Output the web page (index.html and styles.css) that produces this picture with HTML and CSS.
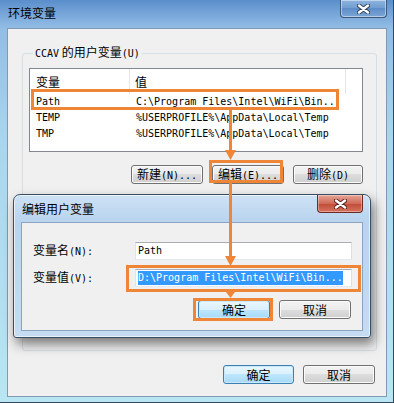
FILE: index.html
```html
<!DOCTYPE html>
<html lang="zh-CN">
<head>
<meta charset="utf-8">
<title>环境变量</title>
<link rel="stylesheet" href="styles.css">
</head>
<body>
<div class="window">
  <div class="titlebar">
    <span class="title">环境变量</span>
    <span class="close-btn">
      <svg width="13" height="10" viewBox="0 0 13 10"><path d="M2 1.5L11 8.5M11 1.5L2 8.5" stroke="#2d3f55" stroke-width="4.2" stroke-linecap="round"/><path d="M2 1.5L11 8.5M11 1.5L2 8.5" stroke="#fff" stroke-width="2.4" stroke-linecap="round"/></svg>
    </span>
  </div>
  <div class="client">
    <fieldset class="group">
      <legend><span class="m">CCAV</span> 的用户变量<span class="m">(U)</span></legend>
      <div class="list">
        <div class="list-head"><span class="c1">变量</span><span class="c2">值</span><span class="c3"></span></div>
        <div class="row"><span class="c1">Path</span><span class="c2">C:\Program Files\Intel\WiFi\Bin...</span></div>
        <div class="row"><span class="c1">TEMP</span><span class="c2">%USERPROFILE%\AppData\Local\Temp</span></div>
        <div class="row"><span class="c1">TMP</span><span class="c2">%USERPROFILE%\AppData\Local\Temp</span></div>
      </div>
      <div class="btns group-btns">
        <button class="btn w72">新建<span class="m">(N)...</span></button>
        <button class="btn w72">编辑<span class="m">(E)...</span></button>
        <button class="btn w70">删除<span class="m">(D)</span></button>
      </div>
    </fieldset>
    <div class="btns main-btns">
      <button class="btn default w71">确定</button>
      <button class="btn w72">取消</button>
    </div>
  </div>

  <div class="dialog">
    <div class="dialog-title">编辑用户变量</div>
    <span class="dlg-close">
      <svg width="13" height="10" viewBox="0 0 13 10"><path d="M2 1.5L11 8.5M11 1.5L2 8.5" stroke="#5a1e1e" stroke-width="4.2" stroke-linecap="round"/><path d="M2 1.5L11 8.5M11 1.5L2 8.5" stroke="#fff" stroke-width="2.4" stroke-linecap="round"/></svg>
    </span>
    <div class="dlg-client">
      <div class="form">
        <span class="lbl">变量名<span class="m">(N):</span></span>
        <div class="field">Path</div>
        <span class="lbl">变量值<span class="m">(V):</span></span>
        <div class="field"><span class="sel">D:\Program Files\Intel\WiFi\Bin...</span></div>
      </div>
      <div class="btns dlg-btns">
        <button class="btn default w72">确定</button>
        <button class="btn w72">取消</button>
      </div>
    </div>
  </div>

  <svg class="annot" width="394" height="403" viewBox="0 0 394 403">
    <g fill="none" stroke="#ef8537" stroke-width="3">
      <rect x="32.5" y="90.5" width="305" height="18"/>
      <rect x="210.5" y="161.5" width="71" height="20"/>
      <rect x="127.5" y="266.5" width="232" height="24"/>
      <rect x="194.5" y="299.5" width="77" height="20"/>
      <path d="M230.5 110V151M230.5 183V257"/>
    </g>
    <g fill="#ef8537">
      <polygon points="225,150 236,150 230.5,160"/>
      <polygon points="225,256 236,256 230.5,266"/>
      <polygon points="226,292 235,292 230.5,298"/>
    </g>
  </svg>
</div>
</body>
</html>
```

FILE: styles.css
```css
* { box-sizing: border-box; }
html, body { margin: 0; padding: 0; }
body {
  width: 394px;
  height: 403px;
  overflow: hidden;
  background: #b9e6f2;
  font-family: "Noto Sans CJK SC", "Liberation Sans", sans-serif;
  font-size: 12px;
  color: #000;
}
.m { font-family: "DejaVu Sans Mono", "Liberation Mono", monospace; font-size: 10px; }

.window {
  position: relative;
  width: 394px;
  height: 403px;
  border-right: 1px solid #34485c;
  border-bottom: 1px solid #34485c;
  background: linear-gradient(180deg, #5a8ecb 0, #78a6da 14px, #92bde5 28px, #a9d6ee 140px, #b9e6f2 403px);
}
.titlebar {
  height: 28px;
  display: flex;
  align-items: flex-start;
  padding-left: 8px;
}
.title { line-height: 26px; }
.close-btn {
  margin-left: auto;
  margin-right: 6px;
  width: 47px;
  height: 18px;
  border: 1px solid #3d5878;
  border-top: none;
  border-radius: 0 0 4px 4px;
  background: linear-gradient(#8fb4df, #6f9bd0 50%, #5e8dc7 50%, #7ba6d7);
  box-shadow: inset 0 0 0 1px rgba(255, 255, 255, .45);
  display: flex;
  align-items: center;
  justify-content: center;
}
.client {
  margin: 0 6px 0 7px;
  height: 369px;
  border: 1px solid #8099b4;
  background: #f0f0f0;
  display: flex;
  flex-direction: column;
}

.group {
  margin: 16px 9px 0 14px;
  padding: 7px 13px 0 6px;
  border: 1px solid #d5dfe5;
  border-radius: 3px;
  height: 306px;
  min-width: 0;
}
.group legend { padding: 0 2px; margin-left: 4px; line-height: 14px; }

.list {
  height: 84px;
  border: 1px solid #828790;
  background: #fff;
}
.list-head { display: flex; height: 25px; line-height: 25px; }
.list-head span { border-right: 1px solid #e5e5e5; }
.list-head .c1 { width: 100px; padding-left: 6px; }
.list-head .c2 { width: 216px; padding-left: 5px; }
.list-head .c3 { flex: 1; border-right: none; }
.row {
  display: flex;
  height: 16px;
  line-height: 16px;
  font-family: "DejaVu Sans Mono", "Liberation Mono", monospace;
  font-size: 10px;
  white-space: pre;
}
.row .c1 { width: 100px; padding-left: 6px; }
.row .c2 { padding-left: 6px; }

.btns { display: flex; justify-content: flex-end; gap: 9px; }
.group-btns { margin-top: 13px; }
.main-btns { margin-top: 14px; padding-right: 11px; }

.btn {
  height: 19px;
  padding: 0;
  border: 1px solid #707070;
  border-radius: 3px;
  background: linear-gradient(#f2f2f2 0%, #ebebeb 50%, #dddddd 50%, #cfcfcf 100%);
  box-shadow: inset 0 0 0 1px #fbfbfb;
  font-family: "Noto Sans CJK SC", sans-serif;
  font-size: 12px;
  line-height: 16px;
  color: #000;
  white-space: nowrap;
}
.btn.default {
  border-color: #3c7fb1;
  background: linear-gradient(#eaf6fd 0%, #d9f0fc 50%, #bee6fd 50%, #a7d9f5 100%);
  box-shadow: inset 0 0 0 1px #c6e9fc;
}
.w70 { width: 70px; }
.w71 { width: 71px; }
.w72 { width: 72px; }

.dialog {
  position: absolute;
  left: 13px;
  top: 194px;
  width: 358px;
  height: 144px;
  border: 1px solid #3b4d60;
  border-radius: 7px 7px 3px 3px;
  background: linear-gradient(180deg, #cde1f4 0, #b9d4ef 27px, #c5dcf2 100%);
  padding: 0 7px 6px;
  box-shadow: 3px 6px 12px rgba(0, 0, 0, .5), inset 0 0 0 1px rgba(255, 255, 255, .6);
}
.dialog-title { height: 27px; line-height: 28px; padding-left: 1px; }
.dlg-close {
  position: absolute;
  right: 7px;
  top: 0;
  width: 46px;
  height: 18px;
  border: 1px solid #6b2b26;
  border-top: none;
  border-radius: 0 0 4px 4px;
  background: linear-gradient(#e6a596, #d06a58 50%, #c04a36 50%, #d6735e);
  box-shadow: inset 0 0 0 1px rgba(255, 255, 255, .35);
  display: flex;
  align-items: center;
  justify-content: center;
}
.dlg-client {
  height: 109px;
  border: 1px solid #8aa3c0;
  background: #f0f0f0;
  padding: 19px 11px 0 11px;
}
.form {
  display: grid;
  grid-template-columns: 102px 217px;
  grid-auto-rows: 18px;
  row-gap: 9px;
  align-items: center;
}
.lbl { line-height: 18px; }
.field {
  height: 18px;
  border: 1px solid #abadb3;
  border-color: #abadb3 #dbdfe6 #e3e9ef #e2e3ea;
  background: #fff;
  padding-left: 2px;
  font-family: "DejaVu Sans Mono", "Liberation Mono", monospace;
  font-size: 10px;
  line-height: 16px;
  white-space: pre;
}
.sel {
  display: inline-block;
  background: #3399ff;
  color: #fff;
  line-height: 14px;
  vertical-align: top;
  margin-top: 1px;
}
.dlg-btns { margin-top: 13px; }

.annot {
  position: absolute;
  left: 0;
  top: 0;
  pointer-events: none;
}
```
